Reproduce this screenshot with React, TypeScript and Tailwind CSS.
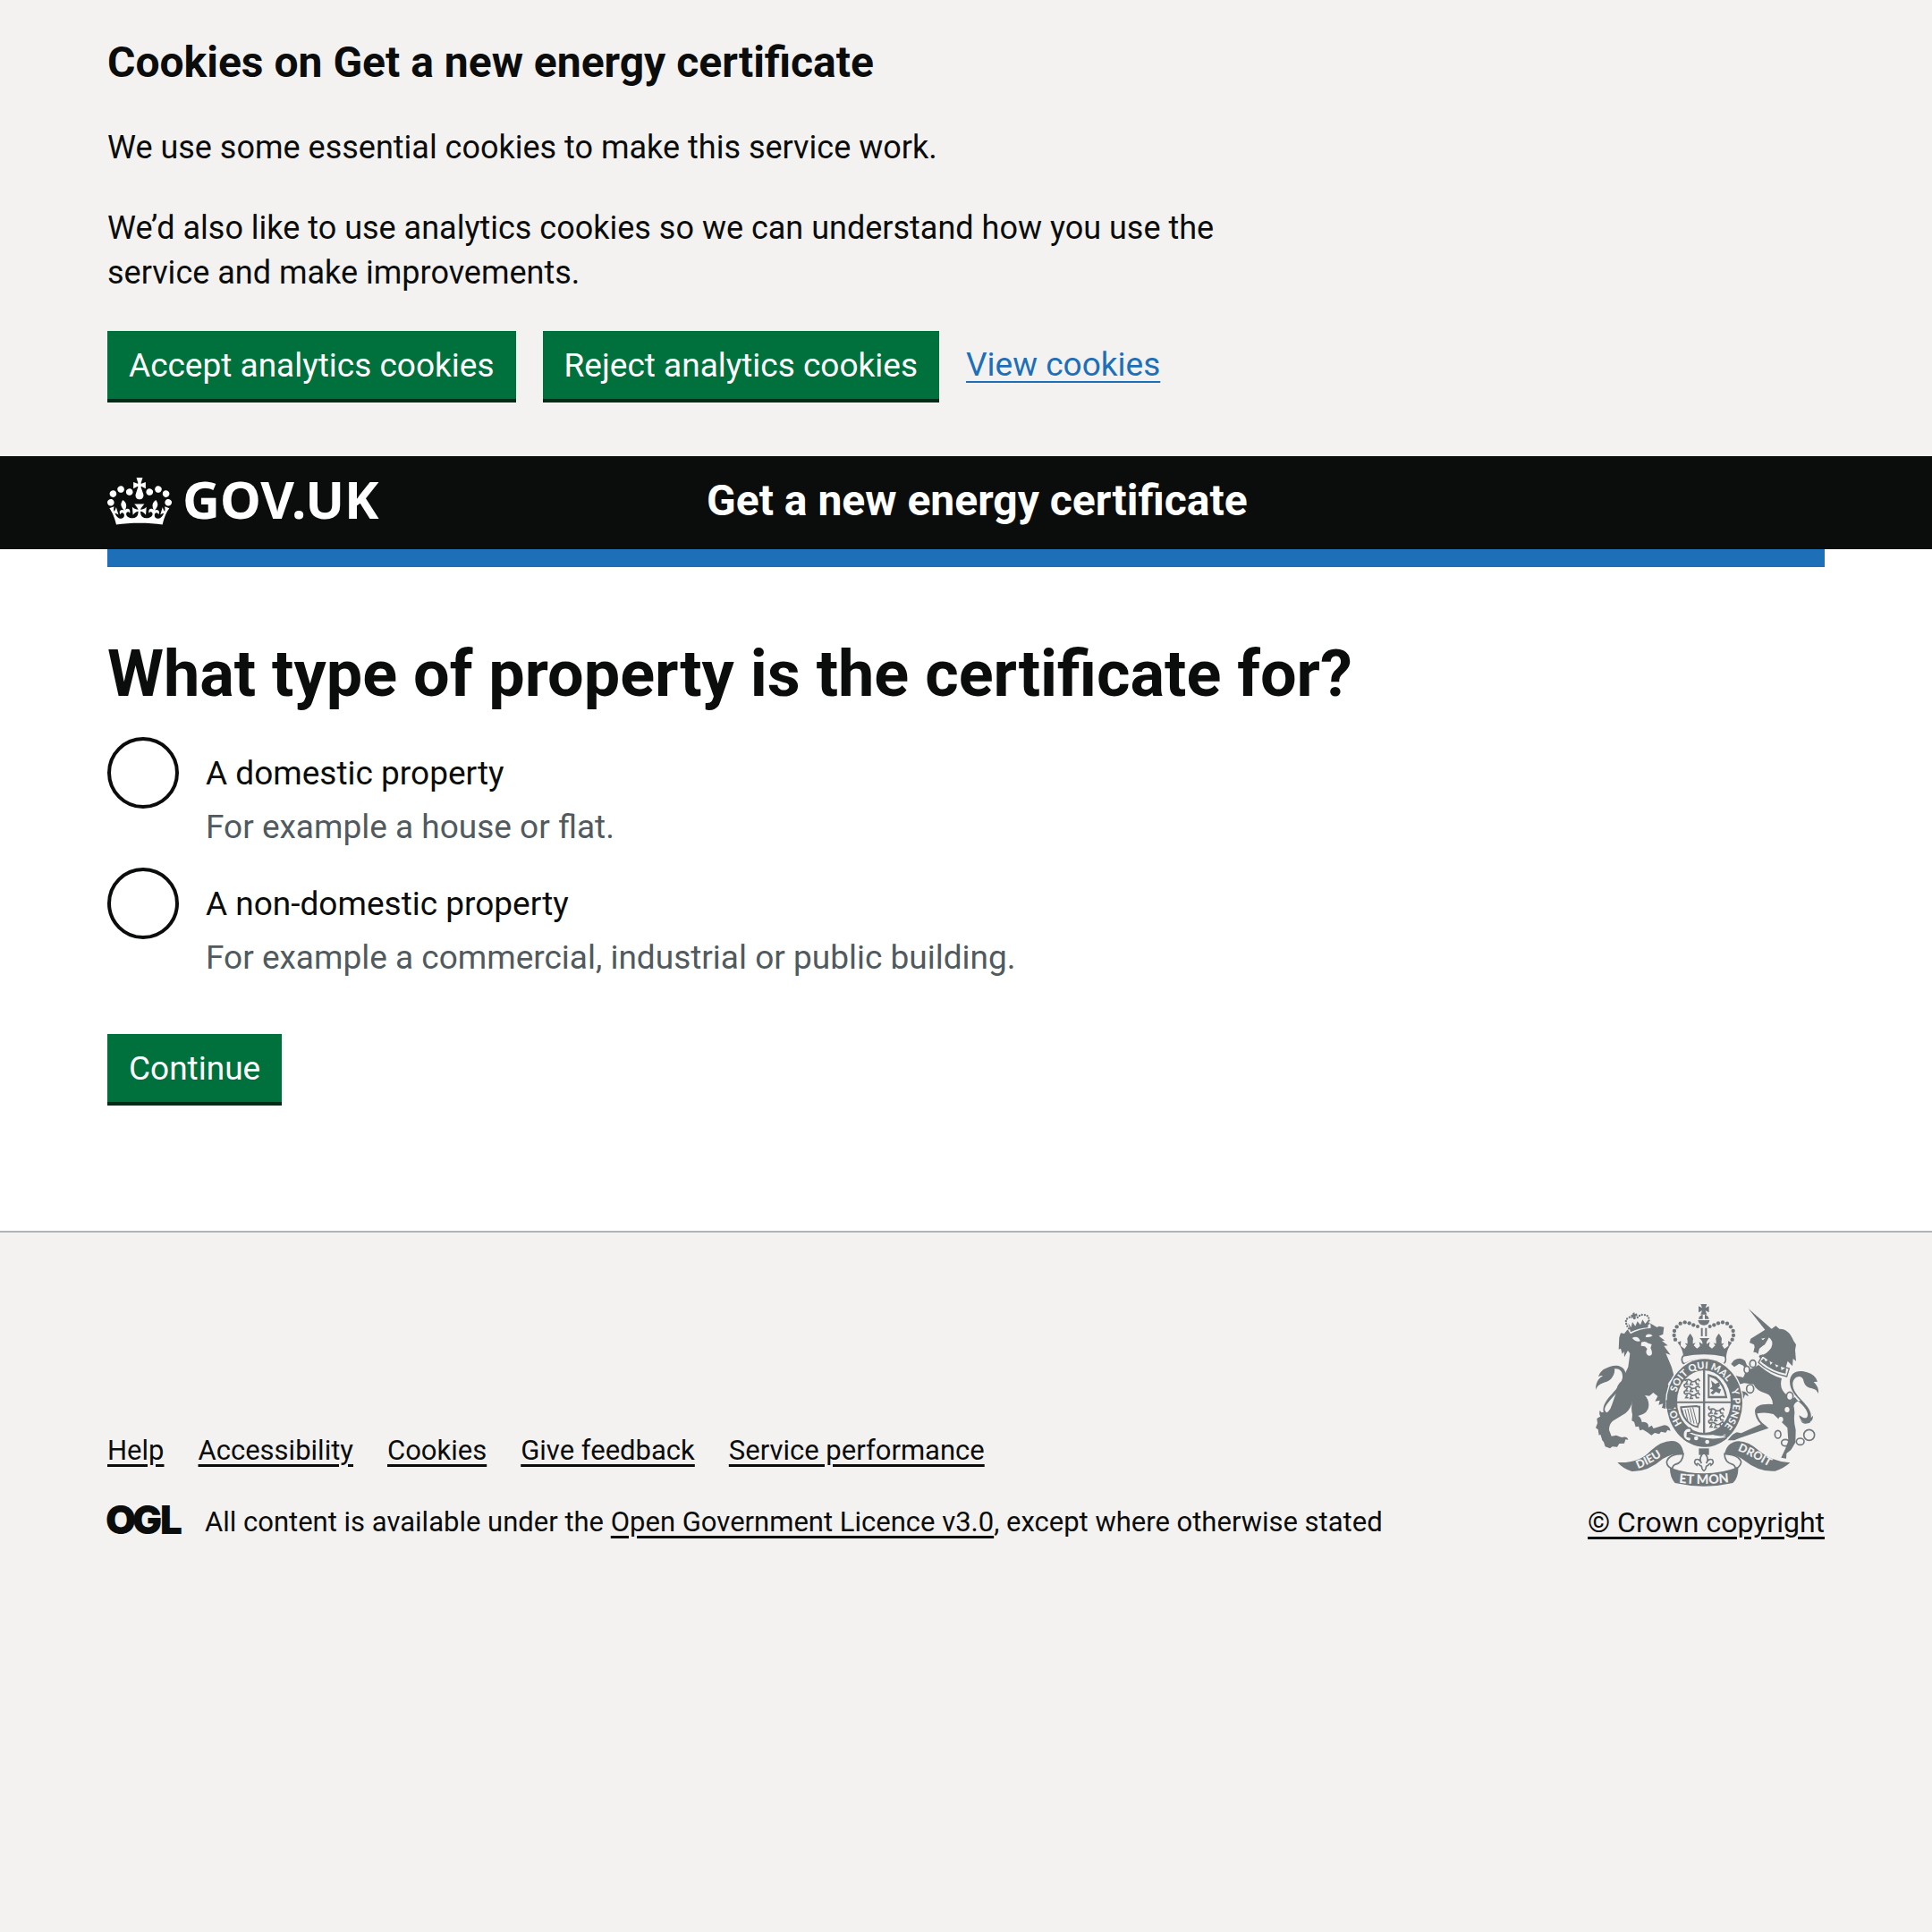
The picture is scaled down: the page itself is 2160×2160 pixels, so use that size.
import React from "react";

const GREY = "#6f777b";
const PAPER = "#f3f2f1";

function Container({ children, className = "" }: { children: React.ReactNode; className?: string }) {
  return (
    <div className="px-8 min-[2100px]:px-[60px]">
      <div className={"mx-auto w-full max-w-[1920px] " + className}>{children}</div>
    </div>
  );
}

function Button({ children, type = "button" }: { children: React.ReactNode; type?: "button" | "submit" }) {
  return (
    <button
      type={type}
      className="cursor-pointer bg-[#00703c] px-6 pt-[14px] pb-3 text-[37px] leading-[50px] text-white shadow-[0_4px_0_#002d18]"
    >
      {children}
    </button>
  );
}

function Crown() {
  return (
    <svg aria-hidden="true" viewBox="0 0 132 97" className="h-[53px] w-[72px] shrink-0 fill-current">
      <path d="M25 30.2c3.5 1.5 7.7-.2 9.1-3.7 1.5-3.6-.2-7.8-3.9-9.2-3.6-1.4-7.6.3-9.1 3.9-1.4 3.5.3 7.5 3.9 9zM9 39.5c3.6 1.5 7.8-.2 9.2-3.7 1.5-3.6-.2-7.8-3.9-9.1-3.6-1.5-7.6.2-9.1 3.8-1.4 3.5.3 7.5 3.8 9zM4.4 57.2c3.5 1.5 7.7-.2 9.1-3.8 1.5-3.6-.2-7.7-3.9-9.1-3.5-1.5-7.6.3-9.1 3.8-1.4 3.5.3 7.6 3.9 9.1zm38.3-21.4c3.5 1.5 7.7-.2 9.1-3.8 1.5-3.6-.2-7.7-3.9-9.1-3.6-1.5-7.6.3-9.1 3.8-1.3 3.6.4 7.7 3.9 9.1zm64.4-5.6c-3.6 1.5-7.8-.2-9.1-3.7-1.5-3.6.2-7.8 3.8-9.2 3.6-1.4 7.7.3 9.2 3.9 1.3 3.5-.4 7.5-3.9 9zm15.9 9.3c-3.6 1.5-7.7-.2-9.1-3.7-1.5-3.6.2-7.8 3.7-9.1 3.6-1.5 7.7.2 9.2 3.8 1.5 3.5-.3 7.5-3.8 9zm4.7 17.7c-3.6 1.5-7.8-.2-9.2-3.8-1.5-3.6.2-7.7 3.9-9.1 3.6-1.5 7.7.3 9.2 3.8 1.3 3.5-.4 7.6-3.9 9.1zM89.3 35.8c-3.6 1.5-7.8-.2-9.2-3.8-1.4-3.6.2-7.7 3.9-9.1 3.6-1.5 7.7.3 9.2 3.8 1.4 3.6-.3 7.7-3.9 9.1zM69.7 17.7l8.9 4.7V9.3l-8.9 2.8c-.2-.3-.5-.6-.9-.9L72.4 0H59.6l3.5 11.2c-.3.3-.6.5-.9.9l-8.8-2.8v13.1l8.8-4.7c.3.3.6.7.9.9l-5 15.4v.1c-.2.8-.4 1.6-.4 2.4 0 4.1 3.1 7.5 7 8.1h.2c.3 0 .7.1 1 .1.4 0 .7 0 1-.1h.2c4-.6 7.1-4.1 7.1-8.1 0-.8-.1-1.7-.4-2.4V34l-5.1-15.4c.4-.2.7-.6 1-.9zM66 92.8c16.9 0 32.8 1.1 47.1 3.2 4-16.9 8.9-26.7 14-33.5l-9.6-3.4c1 4.9 1.1 7.2 0 10.2-1.5-1.4-3-4.3-4.2-8.7L108.6 76c2.8-2 5-3.2 7.5-3.3-4.4 9.4-10 11.9-13.6 11.2-4.3-.8-6.3-4.6-5.6-7.9 1-4.7 5.7-5.9 8-.5 4.3-8.7-3-11.4-7.6-8.8 7.1-7.2 7.9-13.5 2.1-21.1-8 6.1-8.1 12.3-4.5 20.8-4.7-5.4-12.1-2.5-9.5 6.2 3.4-5.2 7.9-2 7.2 3.1-.6 4.3-6.4 7.8-13.5 7.2-10.3-.9-10.9-8-11.2-13.8 2.5-.5 7.1 1.8 11 7.3L80.2 60c-4.1 4.4-8 5.3-12.3 5.4 1.4-4.4 8-11.6 8-11.6H55.5s6.4 7.2 7.9 11.6c-4.2-.1-8-1-12.3-5.4l1.4 16.4c3.9-5.5 8.5-7.7 10.9-7.3-.3 5.8-.9 12.8-11.1 13.8-7.2.6-12.9-2.9-13.5-7.2-.7-5 3.8-8.3 7.1-3.1 2.7-8.7-4.6-11.6-9.4-6.2 3.7-8.5 3.6-14.7-4.6-20.8-5.8 7.6-5 13.9 2.2 21.1-4.7-2.6-11.9.1-7.7 8.8 2.3-5.5 7.1-4.2 8.1.5.7 3.3-1.3 7.1-5.7 7.9-3.5.7-9-1.8-13.5-11.2 2.5.1 4.7 1.3 7.5 3.3l-4.7-15.4c-1.2 4.4-2.7 7.2-4.3 8.7-1.1-3-.9-5.3 0-10.2l-9.5 3.4c5 6.9 9.9 16.7 14 33.5 14.8-2.1 30.8-3.2 47.7-3.2z" />
    </svg>
  );
}

const BEADS: [number, number][] = [
  [403, 124], [389, 118], [374, 115], [359, 119], [347, 130], [339, 144], [338, 159], [342, 173],
];

function Lions({ x, y }: { x: number; y: number }) {
  return (
    <g transform={`translate(${x} ${y})`} fill="none" stroke={GREY} strokeWidth="5" strokeLinecap="round">
      {[0, 23, 46].map((dy) => (
        <g key={dy} transform={`translate(0 ${dy})`}>
          <path d="M2 2q10-6 18 1t17-1l8-5M8 5l-5 9h7M22 7l-4 9h8M36 5l3 9h7M45-3l4 6M2 2q-6-4-3-10" />
        </g>
      ))}
    </g>
  );
}

function RoyalArms() {
  return (
    <svg aria-hidden="true" viewBox="72 54 750 612" className="h-[204px] w-[250px]" fill={GREY}>
      {/* central crown */}
      <path d="M427 54h21l-5 13 12-6v21l-12-6 5 13h-21l5-13-12 6V61l12 6z" />
      <path d="M434 88h7v16h14a18 18 0 0 0-14-15v-1h-7v1a18 18 0 0 0-14 15h14z" />
      <path d="M418 108h39q-2 17-19 17t-20-17zM428 134h6v28h-6zM442 134h6v28h-6z" />
      {BEADS.map(([x, y]) => (
        <g key={y + x}>
          <circle cx={x} cy={y} r="6.5" />
          <circle cx={875 - x} cy={y} r="6.5" />
        </g>
      ))}
      <circle cx="417" cy="129" r="6" />
      <circle cx="458" cy="129" r="6" />
      <path d="M348 183l13-5-1 16 13 10 8-11-7-8 9 2v-10q-4-9 9-24 13 15 9 24v10l9-3-6 9 11 10 10-8-3-14 11 7q2-9-10-20h34q-12 11-10 20l11-7-3 14 10 8 11-10-6-9 9 3v-10q-4-9 9-24 13 15 9 24v10l9-2-7 8 8 11 13-10-1-16 13 5q-18 22-20 52-70-18-142 0-2-30-20-52z" />
      <path d="M368 228q70-15 139 0 8 10 1 22-3 5-8 4-62-32-126 0-7 0-9-8-3-10 3-18z" fill={PAPER} stroke={GREY} strokeWidth="5" />

      {/* lion */}
      <path d="M75 342c0-22 7-38 24-47-8-3-15 3-15 3s5-21 24-28c14-6 26-12 43-9 18 4 29 20 24 43-7 32-38 54-56 78-14 17-20 31-4 37 10 4 22-2 31-11-4 11-12 21-21 25 4 1 8 1 11-1-7 10-20 10-26 4-9 5-20 1-20-7-3-5-3-12-1-19 4 7 8 8 12 7-5-24 13-45 28-61 17-19 34-35 36-56 1-21-10-31-27-29 2 11-3 25-12 34-14 15-40 8-51 37z" />
      <path d="M171 153l10-13 22 3-4-12 57-14 25 15 6-4 17 3-3 24-14 6 20 15-10 1 20 16-13 1 22 30-16-5q9 20 20 47l9 34q-17 9-22 23l18 24-2 12 13 37-12 14-10-2-10-14-5 11-12-3 4-14-15 4 4-15-16 3 9-17-15-12-13 11-15-2q13 13 13 34 0 27-36 35 10 4 13 21 13-2 18 4 6 6 3 14l12-7 6 10 17-5 19-6q18 1 21 19l-10-3-6 9-16-3-6 8-15-4-11 8-14-10-15-9-10 3-4-14-10 2-5-17-8-4 2-20q-6-23 1-50-5 30-24 45l-43 26q-12 10-12 30l8 21 16-3 18 7q18-6 22 8l-9-1-4 13-17 1-7 11-16-1-8 6-16-6-5-15-5-6-6-20-5 3-3-19-8-6 6-15-2-16 13-8q30-10 38-40l14-40q0-25 18-38l22-47 6-45-7-10-12 22-1-19-6 8-5-18-7 3 2-40 5-15z" />
      <path d="M197 168q12-8 22 0l6 10q-16 4-28-10zM244 158q12-8 22 2-9 8-24 4zM228 182q14-5 23 3l12 4-4 12q7 14 4 22-8 9-16 0-6-9 1-19l-8-8-13-2z" fill={PAPER} />
      <path d="M184 142l8 12q30-18 68-20l-2-22z" fill={PAPER} />
      <path d="M184 118l10 14 4-18 10 14 7-16 10 12 7-18 9 14 12-14-3 27q-30 2-58 15z" />
      <path
        d="M186 136Q168 110 184 100Q198 92 208 106M253 119Q258 92 238 90Q220 88 212 104"
        fill="none"
        stroke={GREY}
        strokeWidth="7"
        strokeLinecap="round"
        strokeDasharray="0 9"
      />
      <path d="M199 84l6-2 1 6 7-3 2 9-7 1 2 8-8 1-1-8-6 2-2-8 6-1z" />

      {/* unicorn */}
      <path d="M587 69l78 68 14-10 12 10q32-1 48 41l8 12-3 18 3 37-10-8-2 25-16-17-8 27-80-32-9-10 12-17q20-7 22-25l-18 4-14 11-5 19-6-6-9-1 4-17-2-8-15-7 4-13 48-30z" />
      <path d="M656 166q18 12 8 34-16 24-37 25l3-20q12-12 26-39zM630 170l14-3-8 8z" fill={PAPER} />
      <path d="M634 226q38 32 90 44l-8 27q-58-12-95-47z" fill={PAPER} stroke={GREY} strokeWidth="4" />
      <path d="M628 245l11-9 6 11 12-9 4 20 12-12 8 20 14-10 3 20 16-10-2 21q-46-7-84-42z" />
      <path d="M622 259q42 36 77 44-10 34 16 55 28 28 27 62-4 26 4 56l-1 42-15 25-15 12-1 17-17-3 14-30 10-26-3-44q-22-22-47-46-26-8-55-2 6 25 26 38l13 11-18 6-79 27-18 8h-22l14-18 16-9 15 3 66-30q-20-20-20-45 3-26 60-22-2-29-22-36-34-10-42-31l-32-4-18 5-9-6 12 24 9 4q20 4 20 18l-11-7-6 16-9-10-8 3-5-14-28-44q-3-15 20-15l30 7 9-20-9-20-14-6-16 11-11-10 10-13q22-13 37 2l12 30q20-6 37-18z" />
      <path d="M738 406c-13-15-10-32 5-40 12 18 38 32 43 56 1 12-6 17-16 12l-13-7q3 20 21 25-8-1-16-8 6 14 25 10 8 0 9-7 8-4 8-19l-7 8c4-27-20-46-37-66-14-17-25-31-24-51 3-22 27-30 35-12 3 14 8 24 22 28 14 3 24 5 29 20 2-20-6-30-16-40l13-1q-8-24-35-31c-33-12-57 2-58 30 0 32 20 48 36 66-14-2-25 12-24 27z" />
      <g fill="none" stroke={GREY} strokeWidth="5">
        <ellipse cx="602" cy="254" rx="10" ry="12" />
        <ellipse cx="582" cy="274" rx="9" ry="12" fill={PAPER} />
        <ellipse cx="593" cy="338" rx="12" ry="14" fill={PAPER} />
        <ellipse cx="726" cy="363" rx="11" ry="14" fill={PAPER} />
        <ellipse cx="686" cy="491" rx="10" ry="13" />
        <ellipse cx="711" cy="519" rx="13" ry="11" />
        <ellipse cx="761" cy="515" rx="13" ry="11" />
        <circle cx="791" cy="493" r="18" />
      </g>
      <ellipse cx="717" cy="408" rx="8" ry="9" fill={PAPER} />
      <ellipse cx="696" cy="441" rx="8" ry="9" fill={PAPER} />

      {/* garter */}
      <ellipse cx="440" cy="385" rx="131" ry="152" fill={PAPER} />
      <ellipse cx="440" cy="385" rx="127" ry="147" />
      <ellipse cx="438" cy="381" rx="90" ry="105" fill={PAPER} />
      <defs>
        <path id="garterLeft" d="M365 455A97 112 0 0 1 346 350" />
        <path id="garterTop" d="M346 350A97 112 0 0 1 530 345" />
        <path id="garterRight" d="M529 341A97 112 0 0 1 484 482" />
        <path id="ribbonLeft" d="M217 606Q266 588 322 546" />
        <path id="ribbonMid" d="M354 653Q438 662 530 651" />
        <path id="ribbonRight" d="M551 545Q606 568 680 613" />
      </defs>
      <g fill={PAPER} fontFamily="Lato, sans-serif" fontWeight="900">
        <text fontSize="33"><textPath href="#garterLeft">HON</textPath></text>
        <text fontSize="33"><textPath href="#garterTop">SOIT QUI MAL</textPath></text>
        <text fontSize="33"><textPath href="#garterRight">Y PENSE</textPath></text>
      </g>
      <path d="M310 378l20-12 14 18-8 24-24-4z" />
      <path d="M435 276h7v210h-7zM348 380h180v6H348z" />
      {/* quarters */}
      <Lions x={374} y={308} />
      <Lions x={456} y={406} />
      <path d="M451 288v82h66q-8-50-38-73zm6 10l18 7q26 18 34 57h-52z" fillRule="evenodd" />
      <path d="M462 310l14 12 12-6 4 12-8 8 12 4-6 14-12-6-10 10-8-6 10-10-12-4 8-8z" />
      <g fill="none" stroke={GREY} strokeWidth="4">
        <path d="M361 400l52-4q8 4 10 0v54q-6 8-6 16-18-2-36-20-18-22-20-46z" strokeWidth="6" />
        <path d="M372 404v26M381 404v40M390 404v48M399 404v54M408 404v58" transform="rotate(-14 390 432)" strokeWidth="3" />
      </g>
      {/* buckle and strap */}
      <path d="M366 490q74 46 146 10l-10-4 12-4-28-4q-60 16-110-12z" fill={PAPER} />
      <path d="M382 484q60 30 124 18l10 2-8 6q-60 44-126 6l-12-8z" />
      <path d="M458 490l18-10 38-2-12 18q-20 2-44-6z" />
      <path d="M392 470q-22-2-24 19t22 26q8-6 4-14l-12-3 1-12 11-2q4-9-2-14z" fill={PAPER} stroke={GREY} strokeWidth="5" />
      <circle cx="412" cy="504" r="7" fill={PAPER} />
      <circle cx="449" cy="516" r="7" fill={PAPER} />

      {/* ribbon */}
      <path d="M148 585q72 4 112-40 38-34 72-32 32 2 38 42-38-2-70 18-50 44-104 42-28-8-48-30z" />
      <path d="M727 586q-62-4-104-40-38-34-72-32-36 4-44 44 32-4 66 20 50 40 104 36 28-8 50-28z" />
      <path d="M369 556q-50 0-56 28 2 18 20 22v12q-4-20 8-26 26-6 28-36z" fill={PAPER} stroke={GREY} strokeWidth="5" />
      <path d="M507 556q50 4 56 28-4 18-20 22v12q4-20-8-26-28-6-28-36z" fill={PAPER} stroke={GREY} strokeWidth="5" />
      <path d="M324 602q56 20 115 20t114-22q2 36-18 54-96 22-194 0-18-20-17-52z" />
      <g fill={PAPER} fontFamily="Lato, sans-serif" fontWeight="900">
        <text fontSize="38"><textPath href="#ribbonLeft">DIEU</textPath></text>
        <text fontSize="43"><textPath href="#ribbonMid">ET MON</textPath></text>
        <text fontSize="38"><textPath href="#ribbonRight">DROIT</textPath></text>
      </g>
      {/* fleur-de-lis */}
      <path d="M421 538h34v22h-34z" />
      <path d="M438 552q20 18 8 36 8-18 20-12 8 10-4 18 0-8-6-4-4 6-10 8l-2 8q-6 14-12 0l-2-8q-6-2-10-8-6-4-6 4-12-8-4-18 12-6 20 12-12-18 8-36z" fill={PAPER} stroke={GREY} strokeWidth="5" />
    </svg>
  );
}

function OglLogo() {
  return (
    <svg role="img" aria-label="Open Government Licence" viewBox="0 0 82 34" className="h-[34px] w-[82px] shrink-0 overflow-visible">
      <text y="33" fontFamily="Inter, sans-serif" fontWeight="900" fontSize="44" fill="#0b0c0c">
        <tspan x="-2">O</tspan>
        <tspan x="28">G</tspan>
        <tspan x="59">L</tspan>
      </text>
    </svg>
  );
}

const FOOTER_LINKS = ["Help", "Accessibility", "Cookies", "Give feedback", "Service performance"];

const OPTIONS = [
  { id: "domestic", label: "A domestic property", hint: "For example a house or flat." },
  { id: "non-domestic", label: "A non-domestic property", hint: "For example a commercial, industrial or public building." },
];

export default function App() {
  return (
    <div className="flex min-h-screen flex-col bg-[#f3f2f1] font-['Roboto',sans-serif] text-[37px] leading-[50px] text-[#0b0c0c]">
      <section aria-label="Cookies on Get a new energy certificate">
        <Container className="pt-10 pb-[60px]">
          <div className="max-w-[1270px] text-[36px]">
            <h2 className="mb-10 text-[48px] leading-[60px] font-bold">Cookies on Get a new energy certificate</h2>
            <p className="mb-10">We use some essential cookies to make this service work.</p>
            <p className="mb-10">
              We’d also like to use analytics cookies so we can understand how you use the service and make improvements.
            </p>
          </div>
          <div className="flex flex-wrap items-center gap-[30px] pb-1">
            <Button>Accept analytics cookies</Button>
            <Button>Reject analytics cookies</Button>
            <a href="#cookies" className="text-[#1d70b8] underline decoration-2 underline-offset-[6px]">View cookies</a>
          </div>
        </Container>
      </section>

      <header className="bg-[#0b0c0c] text-white">
        <Container className="grid grid-cols-[670px_1fr] items-center pt-5 pb-6">
          <a href="#home" className="flex items-center gap-3" aria-label="GOV.UK">
            <Crown />
            <span className="pb-1 font-['Noto_Sans',sans-serif] text-[58px] leading-[56px] font-bold">GOV.UK</span>
          </a>
          <a href="#service" className="text-[48px] leading-[60px] font-bold">Get a new energy certificate</a>
        </Container>
      </header>

      <div className="border-b-2 border-[#b1b4b6] bg-white">
        <Container>
          <div className="h-5 bg-[#1d70b8]" />
          <main className="pt-20 pb-36">
            <form onSubmit={(e) => e.preventDefault()}>
              <fieldset>
                <legend className="mb-[30px]">
                  <h1 className="text-[72px] leading-[80px] font-bold">What type of property is the certificate for?</h1>
                </legend>
                <div className="flex flex-col gap-5">
                  {OPTIONS.map((o) => (
                    <div key={o.id} className="flex gap-[30px]">
                      <input
                        type="radio"
                        name="property"
                        id={o.id}
                        aria-describedby={o.id + "-hint"}
                        className="size-20 shrink-0 appearance-none rounded-full border-4 border-[#0b0c0c] checked:bg-[#0b0c0c] checked:shadow-[inset_0_0_0_16px_white]"
                      />
                      <div className="pt-4">
                        <label htmlFor={o.id} className="block">{o.label}</label>
                        <p id={o.id + "-hint"} className="pt-[10px] text-[#505a5f]">{o.hint}</p>
                      </div>
                    </div>
                  ))}
                </div>
              </fieldset>
              <div className="mt-[60px]">
                <Button type="submit">Continue</Button>
              </div>
            </form>
          </main>
        </Container>
      </div>

      <footer className="text-[31px] leading-[40px]">
        <Container className="flex items-end justify-between gap-10 pt-20">
          <div>
            <ul className="mb-10 flex flex-wrap gap-x-[38px]">
              {FOOTER_LINKS.map((l) => (
                <li key={l}>
                  <a href="#footer" className="underline decoration-[3px] underline-offset-[5px]">{l}</a>
                </li>
              ))}
            </ul>
            <div className="flex gap-[27px]">
              <OglLogo />
              <p>
                All content is available under the{" "}
                <a href="#licence" className="underline decoration-[3px] underline-offset-[5px]">Open Government Licence v3.0</a>
                , except where otherwise stated
              </p>
            </div>
          </div>
          <a href="#copyright" className="flex flex-col items-center gap-5 underline decoration-[3px] underline-offset-[5px]">
            <RoyalArms />
            <span className="text-[32px] whitespace-nowrap">© Crown copyright</span>
          </a>
        </Container>
      </footer>
    </div>
  );
}
